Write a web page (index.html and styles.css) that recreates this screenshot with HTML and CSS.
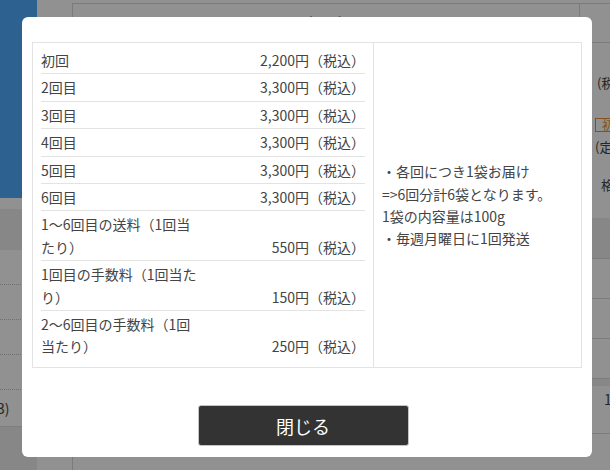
FILE: index.html
```html
<!DOCTYPE html>
<html lang="ja">
<head>
<meta charset="utf-8">
<title>お届けスケジュール</title>
<link rel="stylesheet" href="styles.css">
</head>
<body>
<div class="page">
  <div class="side">
    <div class="side-img"></div>
    <div class="side-gap"></div>
    <div class="side-band"></div>
    <div class="side-row"></div>
    <div class="side-row"></div>
    <div class="side-row"></div>
    <div class="side-row"></div>
    <div class="side-note">3)</div>
    <div class="side-foot"></div>
  </div>
  <div class="main">
    <div class="main-box">
      <div class="main-head">商品名</div>
    </div>
  </div>
  <div class="aside">
    <div class="aside-head">ト</div>
    <div class="aside-body">
      <div class="aside-line aside-tax">(税込)</div>
      <div class="aside-badge">初回</div>
      <div class="aside-line aside-def">(定期)</div>
      <div class="aside-line aside-price">格</div>
    </div>
    <div class="aside-band"></div>
    <div class="aside-row"></div>
    <div class="aside-row"></div>
    <div class="aside-row"></div>
    <div class="aside-row aside-row-dark"></div>
    <div class="aside-num">1</div>
    <div class="aside-foot"></div>
  </div>
</div>

<div class="overlay">
  <div class="modal">
    <div class="plan">
      <div class="plan-list">
        <div class="row"><div class="label">初回</div><div class="price">2,200円（税込）</div></div>
        <div class="row"><div class="label">2回目</div><div class="price">3,300円（税込）</div></div>
        <div class="row"><div class="label">3回目</div><div class="price">3,300円（税込）</div></div>
        <div class="row"><div class="label">4回目</div><div class="price">3,300円（税込）</div></div>
        <div class="row"><div class="label">5回目</div><div class="price">3,300円（税込）</div></div>
        <div class="row"><div class="label">6回目</div><div class="price">3,300円（税込）</div></div>
        <div class="row"><div class="label">1〜6回目の送料（1回当たり）</div><div class="price">550円（税込）</div></div>
        <div class="row"><div class="label">1回目の手数料（1回当たり）</div><div class="price">150円（税込）</div></div>
        <div class="row"><div class="label">2〜6回目の手数料（1回当たり）</div><div class="price">250円（税込）</div></div>
      </div>
      <div class="plan-note">
        <p>・各回につき1袋お届け<br>=&gt;6回分計6袋となります。<br>1袋の内容量は100g<br>・毎週月曜日に1回発送</p>
      </div>
    </div>
    <div class="footer">
      <button class="close" type="button">閉じる</button>
    </div>
  </div>
</div>
</body>
</html>
```

FILE: styles.css
```css
html, body {
  margin: 0;
  padding: 0;
}
body {
  width: 610px;
  height: 470px;
  overflow: hidden;
  background: #fff;
  color: #444;
  font-family: "Noto Sans CJK JP", "Noto Sans", sans-serif;
}

/* background page */
.page {
  display: flex;
  height: 470px;
}
.side {
  width: 37px;
  flex: none;
  display: flex;
  flex-direction: column;
}
.side-img {
  height: 198px;
  background: #4fadfd;
}
.side-gap {
  height: 11px;
}
.side-band {
  height: 41px;
  background: #eeeeee;
}
.side-row {
  height: 34px;
  border-bottom: 1px dotted #c4c4c4;
}
.side-note {
  height: 36px;
  border-bottom: 1px solid #dddddd;
  font-size: 14px;
  line-height: 36px;
  text-indent: -3px;
  white-space: nowrap;
  overflow: hidden;
}
.side-foot {
  flex: 1;
  background: #eeeeee;
}
.main {
  flex: none;
  width: 507px;
  padding: 3px 0 0 35px;
}
.main-box {
  height: 100%;
  border-top: 1px solid #d8d8d8;
  border-left: 1px solid #d8d8d8;
}
.main-head {
  height: 38px;
  border-bottom: 1px solid #d8d8d8;
  text-align: center;
  font-size: 15px;
  line-height: 38px;
}
.aside {
  flex: 1;
  padding-top: 3px;
  display: flex;
  flex-direction: column;
  overflow: hidden;
}
.aside-head {
  height: 38px;
  border-top: 1px solid #d8d8d8;
  border-bottom: 1px solid #d8d8d8;
  border-left: 1px solid #d8d8d8;
  padding-left: 28px;
  font-size: 14px;
  line-height: 38px;
  white-space: nowrap;
}
.aside-body {
  height: 175px;
  padding: 31px 0 0 16px;
  box-sizing: border-box;
  font-size: 13px;
  white-space: nowrap;
}
.aside-line {
  line-height: 18px;
}
.aside-tax {
  padding-left: 2px;
}
.aside-badge {
  display: inline-block;
  margin-top: 26px;
  padding: 0 6px;
  border: 1px solid #e4913e;
  color: #e4913e;
  line-height: 12px;
  font-size: 12px;
}
.aside-def {
  margin-top: 4px;
}
.aside-price {
  margin-top: 20px;
  padding-left: 6px;
}
.aside-band {
  height: 40px;
  background: #eeeeee;
}
.aside-row {
  height: 39px;
  border-top: 1px solid #d8d8d8;
}
.aside-row-dark {
  height: 7px;
  background: #eeeeee;
}
.aside-num {
  height: 47px;
  border-bottom: 1px solid #d8d8d8;
  padding-left: 25px;
  font-size: 14px;
  line-height: 26px;
}
.aside-foot {
  flex: 1;
}

/* overlay + modal */
.overlay {
  position: fixed;
  inset: 0;
  background: rgba(0, 0, 0, 0.43);
  padding: 17px 18px 13px 22px;
}
.modal {
  height: 440px;
  background: #fff;
  border-radius: 6px;
  padding: 25px 10px 11px;
  box-sizing: border-box;
  display: flex;
  flex-direction: column;
}
.plan {
  display: flex;
  border: 1px solid #e3e3e3;
}
.plan-list {
  width: 324px;
  flex: none;
  padding: 4px 8px 7px;
  border-right: 1px solid #e3e3e3;
}
.row {
  display: flex;
  padding: 2px 0;
  border-bottom: 1px solid #e3e3e3;
  font-size: 14px;
  line-height: 22.4px;
}
.row:last-child {
  border-bottom: none;
}
.label {
  width: 50%;
}
.price {
  width: 50%;
  text-align: right;
  align-self: flex-end;
}
.plan-note {
  flex: 1;
  display: flex;
  align-items: center;
  padding: 0 8px;
  font-size: 14px;
  line-height: 22.4px;
}
.plan-note p {
  margin: 0;
}
.footer {
  flex: 1;
  display: flex;
  align-items: flex-end;
  justify-content: center;
  padding-right: 8px;
}
.close {
  width: 211px;
  height: 41px;
  background: #333;
  color: #fff;
  border: 1px solid #c4c4c4;
  border-radius: 3px;
  font-family: inherit;
  font-size: 18px;
  padding: 0;
}
```
